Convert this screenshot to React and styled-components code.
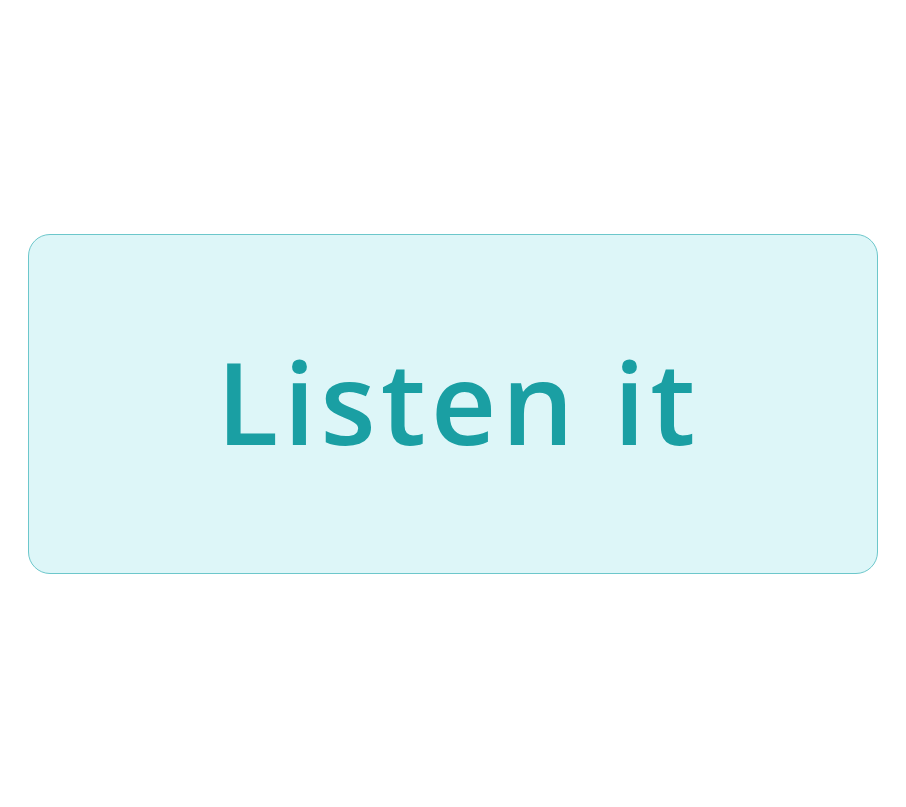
import React from "react";
import styled, { createGlobalStyle } from "styled-components";

const GlobalStyle = createGlobalStyle`
  html, body {
    margin: 0;
    padding: 0;
    background: #ffffff;
  }
`;

export default function App() {
  return (
    <>
      <GlobalStyle />
      <Page>
        <ListenButton type="button">Listen it</ListenButton>
      </Page>
    </>
  );
}

const Page = styled.div`
  height: 807px;
  display: flex;
  align-items: center;
  justify-content: center;
  padding: 0 28px;
  box-sizing: border-box;
`;

const ListenButton = styled.button`
  width: 100%;
  height: 340px;
  box-sizing: border-box;
  display: flex;
  align-items: center;
  justify-content: center;
  background: #ddf6f8;
  border: 1px solid #6cc7cb;
  border-radius: 22px;
  color: #1a9fa3;
  font-family: "Open Sans", "Noto Sans", sans-serif;
  font-weight: 600;
  font-size: 114px;
  letter-spacing: 5px;
  line-height: 1;
  padding: 0 0 6px 11px;
  cursor: pointer;
`;
